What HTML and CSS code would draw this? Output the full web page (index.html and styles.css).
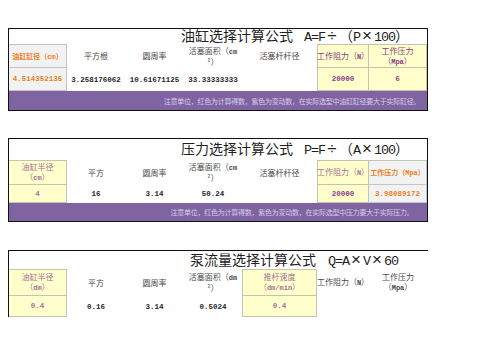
FILE: index.html
```html
<!DOCTYPE html>
<html lang="zh-CN">
<head>
<meta charset="utf-8">
<title>油缸选择计算公式</title>
<link rel="stylesheet" href="styles.css">
</head>
<body>
<div class="sheet s1">
  <div class="title"><span class="tline">油缸选择计算公式<span class="formula"><span class="asc">A=F</span><span class="op">÷</span>（<span class="asc">P</span><span class="op">×</span><span class="asc">100</span>）</span></span></div>
  <div class="cell g bt org"><span class="in">油缸缸径（<span class="lat">cm</span>）</span></div>
  <div class="cell"><span class="in">平方根</span></div>
  <div class="cell"><span class="in">圆周率</span></div>
  <div class="cell"><span class="in">活塞面积（<span class="lat">cm</span><br>²）</span></div>
  <div class="cell"><span class="in">活塞杆杆径</span></div>
  <div class="cell y bt bl pur"><span class="in">工作阻力（<span class="lat">N</span>）</span></div>
  <div class="cell y bt pur"><span class="in">工作压力<br>（<span class="lat">Mpa</span>）</span></div>
  <div class="cell g num org"><span class="in">4.514352135</span></div>
  <div class="cell num"><span class="in">3.258176062</span></div>
  <div class="cell num"><span class="in">10.61671125</span></div>
  <div class="cell num"><span class="in">33.33333333</span></div>
  <div class="cell"></div>
  <div class="cell y bl num pur"><span class="in">20000</span></div>
  <div class="cell y num pur"><span class="in">6</span></div>
  <div class="note">注意单位，红色为计算得数，紫色为变动数，在实际选型中油缸缸径要大于实际缸径。</div>
</div>

<div class="sheet s2">
  <div class="title"><span class="tline">压力选择计算公式<span class="formula"><span class="asc">P=F</span><span class="op">÷</span>（<span class="asc">A</span><span class="op">×</span><span class="asc">100</span>）</span></span></div>
  <div class="cell y bt mauve"><span class="in">油缸半径<br>（<span class="lat">cm</span>）</span></div>
  <div class="cell"><span class="in">平方</span></div>
  <div class="cell"><span class="in">圆周率</span></div>
  <div class="cell"><span class="in">活塞面积（<span class="lat">cm</span><br>²）</span></div>
  <div class="cell"><span class="in">活塞杆杆径</span></div>
  <div class="cell y bt bl mauve"><span class="in">工作阻力（<span class="lat">N</span>）</span></div>
  <div class="cell g bt org"><span class="in">工作压力（<span class="lat">Mpa</span>）</span></div>
  <div class="cell y num mauve"><span class="in">4</span></div>
  <div class="cell num"><span class="in">16</span></div>
  <div class="cell num"><span class="in">3.14</span></div>
  <div class="cell num"><span class="in">50.24</span></div>
  <div class="cell"></div>
  <div class="cell y bl num pur"><span class="in">20000</span></div>
  <div class="cell g num org"><span class="in">3.98089172</span></div>
  <div class="note">注意单位，红色为计算得数，紫色为变动数，在实际选型中压力要大于实际压力。</div>
</div>

<div class="sheet s3">
  <div class="title"><span class="tline">泵流量选择计算公式<span class="formula f3"><span class="asc">Q=A</span><span class="op">×</span><span class="asc">V</span><span class="op">×</span><span class="asc">60</span></span></span></div>
  <div class="cell y bt mauve"><span class="in">油缸半径<br>（<span class="lat">dm</span>）</span></div>
  <div class="cell"><span class="in">平方</span></div>
  <div class="cell"><span class="in">圆周率</span></div>
  <div class="cell"><span class="in">活塞面积（<span class="lat">dm</span><br>²）</span></div>
  <div class="cell y bt bl mauve"><span class="in">推杆速度<br>（<span class="lat">dm/min</span>）</span></div>
  <div class="cell"><span class="in">工作阻力（<span class="lat">N</span>）</span></div>
  <div class="cell"><span class="in">工作压力<br>（<span class="lat">Mpa</span>）</span></div>
  <div class="cell y num mauve"><span class="in">0.4</span></div>
  <div class="cell num"><span class="in">0.16</span></div>
  <div class="cell num"><span class="in">3.14</span></div>
  <div class="cell num"><span class="in">0.5024</span></div>
  <div class="cell y bl num mauve"><span class="in">0.4</span></div>
  <div class="cell"></div>
  <div class="cell"></div>
</div>
</body>
</html>
```

FILE: styles.css
```css
* {
  box-sizing: border-box;
  margin: 0;
  padding: 0;
}

html, body {
  background: #ffffff;
}

body {
  width: 503px;
  height: 356px;
  overflow: hidden;
  padding: 28px 0 0 8px;
  font-family: "Noto Sans CJK SC", sans-serif;
  color: #444444;
}

.sheet {
  width: 420px;
  border: 1px solid #111111;
  display: grid;
  grid-template-columns: 58px 58px 59px 58px 75px 52px 58px;
}

.s1 {
  grid-template-rows: 15px 24px 23px 19px;
}

.s2 {
  margin-top: 27px;
  grid-template-rows: 21px 25px 18px 18px;
}

.s3 {
  margin-top: 28px;
  grid-template-rows: 18px 27px 21px;
  border-right: none;
  border-bottom: none;
}

.title {
  grid-column: 1 / -1;
  display: flex;
  align-items: center;
  padding-left: 172px;
  font-size: 14px;
  color: #1f1f1f;
  white-space: nowrap;
}

.tline {
  display: block;
  line-height: 14px;
}

.s3 .title {
  padding-left: 181px;
}

.formula {
  margin-left: 11px;
}

.formula.f3 {
  margin-left: 12px;
}

.asc {
  font-family: "Liberation Mono", monospace;
  font-size: 13.5px;
  letter-spacing: -1.1px;
}

.op {
  display: inline-block;
  width: 14px;
  text-align: center;
  font-family: "Liberation Sans", sans-serif;
  font-size: 17px;
  line-height: 14px;
}

.cell {
  display: flex;
  align-items: center;
  justify-content: center;
  text-align: center;
  font-size: 8px;
  line-height: 10px;
  color: #4a4a4a;
  white-space: nowrap;
}

.in {
  display: block;
}

.lat {
  font-family: "Liberation Mono", monospace;
  font-weight: bold;
  font-size: 7px;
}

.num {
  font-family: "Liberation Mono", monospace;
  font-size: 7.5px;
  font-weight: bold;
  color: #262626;
}

.g {
  background: #f2f2f2;
  border-right: 1px solid #c4c4c4;
  border-bottom: 1px solid #c4c4c4;
}

.y {
  background: #ffffcc;
  border-right: 1px solid #c4c4b0;
  border-bottom: 1px solid #c4c4b0;
}

.bt {
  border-top: 1px solid #c4c4b0;
}

.bl {
  border-left: 1px solid #c4c4b0;
}

.org {
  color: #f07f1e;
  font-weight: bold;
  font-size: 7px;
}

.num.org {
  font-size: 7.5px;
}

.pur {
  color: #8a3a86;
}

.mauve {
  color: #a8709a;
}

.note {
  grid-column: 1 / -1;
  display: flex;
  align-items: center;
  justify-content: center;
  padding-left: 148px;
  background: #8064a2;
  color: #d6cce6;
  font-size: 7px;
  line-height: 8px;
  letter-spacing: -0.25px;
  white-space: nowrap;
}
```
